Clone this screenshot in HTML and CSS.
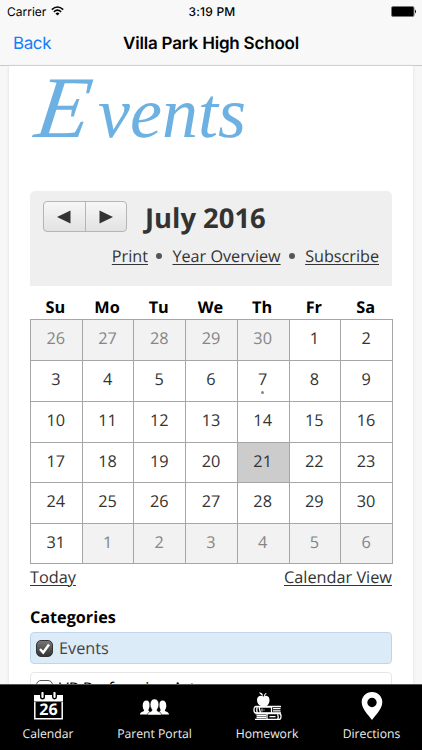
FILE: index.html
```html
<!doctype html>
<html lang="en">
<head>
    <meta charset="utf-8">
    <title>Villa Park High School</title>
    <link rel="stylesheet" href="styles.css">
</head>
<body>
<div class="app">
    <header class="topbar">
        <div class="status">
            <div class="carrier">Carrier
                <svg width="13" height="10" viewBox="0 0 13 10"><g fill="none" stroke="#000" stroke-width="1.6"><path d="M.8 3.6Q6.5-1.6 12.2 3.6"/><path d="M2.9 5.8Q6.5 2.6 10.1 5.8"/></g><path d="M4.5 7.4Q6.5 5.8 8.5 7.4L6.5 9.5z"/></svg>
            </div>
            <div class="time">3:19 PM</div>
            <svg class="battery" width="26" height="11" viewBox="0 0 26 11"><rect x=".5" y=".5" width="22.5" height="10" rx="1.5" stroke="#777"/><path d="M24 3.5q2 2 0 4z"/></svg>
        </div>
        <nav class="navbar">
            <a class="back">Back</a>
            <h2>Villa Park High School</h2>
        </nav>
    </header>

    <main class="page">
        <h1 class="title"><span class="cap">E</span>vents</h1>

        <section class="cal-head">
            <div class="cal-row">
                <div class="pager">
                    <span><svg width="14" height="14" viewBox="0 0 14 14"><path d="M0 7L13.500 .5v13z"/></svg></span>
                    <span><svg width="14" height="14" viewBox="0 0 14 14"><path d="M14 7L.5 .5v13z"/></svg></span>
                </div>
                <h3>July 2016</h3>
            </div>
            <div class="cal-links"><a>Print</a><i></i><a>Year Overview</a><i></i><a>Subscribe</a></div>
        </section>

        <table class="cal">
            <thead>
            <tr><th>Su</th><th>Mo</th><th>Tu</th><th>We</th><th>Th</th><th>Fr</th><th>Sa</th></tr>
            </thead>
            <tbody>
            <tr><td class="off">26</td><td class="off">27</td><td class="off">28</td><td class="off">29</td><td class="off">30</td><td>1</td><td>2</td></tr>
            <tr><td>3</td><td>4</td><td>5</td><td>6</td><td class="event">7</td><td>8</td><td>9</td></tr>
            <tr><td>10</td><td>11</td><td>12</td><td>13</td><td>14</td><td>15</td><td>16</td></tr>
            <tr class="short"><td>17</td><td>18</td><td>19</td><td>20</td><td class="today">21</td><td>22</td><td>23</td></tr>
            <tr><td>24</td><td>25</td><td>26</td><td>27</td><td>28</td><td>29</td><td>30</td></tr>
            <tr class="short"><td>31</td><td class="off">1</td><td class="off">2</td><td class="off">3</td><td class="off">4</td><td class="off">5</td><td class="off">6</td></tr>
            </tbody>
        </table>
        <div class="cal-foot"><a>Today</a><a>Calendar View</a></div>

        <h4>Categories</h4>
        <div class="cat on">
            <span class="box"><svg width="13" height="13" viewBox="0 0 13 13"><path d="M2 7l3.200 3.500L11 2.500" fill="none" stroke="#fff" stroke-width="2.400"/></svg></span>
            Events
        </div>
        <div class="cat"><span class="box"></span>VP Performing Arts</div>
    </main>

    <footer class="tabs">
        <a class="tab t1">
            <svg width="29" height="28" viewBox="0 0 29 28">
                <path d="M0 3h6v2a2.500 2.500 0 0 0 5 0V3h7v2a2.500 2.500 0 0 0 5 0V3h6v6.500H0z" fill="#fff"/>
                <path d="M.8 10v16.700h27.400V10" fill="none" stroke="#fff" stroke-width="1.500"/>
                <path d="M8.500 1v4M20.500 1v4" stroke="#fff" stroke-width="2.200" stroke-linecap="round"/>
                <text x="14.500" y="23" text-anchor="middle" class="day">26</text>
            </svg>
            <span>Calendar</span>
        </a>
        <a class="tab t2">
            <svg width="29" height="28" viewBox="0 0 29 28" fill="#fff">
                <path d="M0 22.500c.2-2.700 3-2.300 4-3.700.3-1-1.400-1.800-1.300-5.200C2.800 10 4.300 8.500 6.300 8.500c2.300 0 3.400 1.700 3.300 4.700 0 3-1.400 3.800-1.200 5 .1.700.5 1 1.200 1.200L7.500 22.500z"/>
                <path d="M29 22.500c-.2-2.700-3-2.300-4-3.700-.3-1 1.400-1.800 1.300-5.200-.1-3.600-1.600-5.100-3.600-5.100-2.300 0-3.400 1.700-3.300 4.700 0 3 1.400 3.800 1.200 5-.1.700-.5 1-1.200 1.200l2.100 3.100z"/>
                <path d="M7.300 23c.1-3.200 3.800-3 4.700-4.500.4-1.300-1.800-2.300-1.800-6 0-3.600 1.900-5.500 4.300-5.500s4.300 1.900 4.300 5.500c0 3.700-2.200 4.700-1.800 6 .9 1.500 4.600 1.300 4.700 4.500z" stroke="#000" stroke-width=".5"/>
            </svg>
            <span>Parent Portal</span>
        </a>
        <a class="tab t3">
            <svg width="29" height="28" viewBox="0 0 29 28">
                <path d="M10.500 4.500c2.500-1.500 6-.5 6 3.500 0 3.500-2 6-3.500 6h-5c-2-.5-4-3-4-6 0-4 4-5 6.500-3.500zM10 4C8.500 3 7 2 6 .500 8.500.2 10 1.500 10 4zM11 4c0-1.500.7-2.500 2-3l.7.900C12.500 2.300 12 3 11.800 4z" fill="#fff"/>
                <g fill="none" stroke="#fff" stroke-width="1.300">
                    <path d="M28 14.500H3c-2.700 0-2.700 6.500 0 6.500h25M4.500 14.500q-1.500 3.200 0 6.500M6 15h12.500v6H7.500zM20 16.700h7.500M20 18.800h7.500"/>
                    <path d="M2.500 21.500H26c2.700 0 2.700 6 0 6H2M3.500 23.500H13M3.500 25.500H13M14 22v5.500M24.500 22.500q1.500 2.500 0 5M16.500 24.700h6"/>
                </g>
                <path d="M9 16.500v3M10.500 18h1" stroke="#fff"/>
            </svg>
            <span>Homework</span>
        </a>
        <a class="tab t4">
            <svg width="22" height="28" viewBox="0 0 22 28"><path fill="#fff" fill-rule="evenodd" d="M11 0c6 0 10.300 4.400 10.300 10.200C21.300 16.500 15.500 22 11 28 6.500 22 .7 16.500.7 10.200.7 4.400 5 0 11 0zm0 5.800a4.700 4.700 0 1 0 0 9.400 4.700 4.700 0 0 0 0-9.400z"/></svg>
            <span>Directions</span>
        </a>
    </footer>
</div>
</body>
</html>
```
FILE: styles.css
```css
* { box-sizing: border-box; }
body { margin: 0; font-family: "Open Sans", "Noto Sans", sans-serif; color: #333; text-rendering: geometricPrecision; }
h1, h2, h3, h4 { margin: 0; }
.app { display: flex; flex-direction: column; height: 750px; overflow: hidden; background: #f7f7f7; }

/* top bar */
.topbar { flex: none; height: 66px; background: #f8f8f8; border-bottom: 1px solid #c9c9c9; font-family: Inter, sans-serif; color: #000; }
.status { display: grid; grid-template-columns: 1fr auto 1fr; align-items: center; height: 22px; padding: 0 5px 0 7px; font-size: 12px; }
.carrier { display: flex; align-items: center; gap: 5px; }
.time { font-weight: 500; letter-spacing: .2px; }
.battery { justify-self: end; }
.navbar { display: grid; grid-template-columns: 1fr auto 1fr; align-items: center; height: 43px; padding: 0 13px; }
.back { color: #147efb; font-size: 17px; letter-spacing: -.4px; }
.navbar h2 { font-size: 17px; font-weight: 600; letter-spacing: -.2px; }

/* content */
.page { flex: 1; min-height: 0; overflow: hidden; margin: 0 9px; padding: 0 21px; background: #fff; box-shadow: 0 0 3px #ddd; }
.title { height: 125px; padding: 1px 0 0 7px; font: italic 72px/84px "Liberation Serif", serif; color: #6cb1e1; white-space: nowrap; }
.title .cap { display: inline-block; width: 61px; font-size: 88px; line-height: 84px; transform: skewX(-8deg); }

.cal-head { height: 95px; padding: 10px 13px 0; background: #efefef; border-radius: 5px 5px 0 0; }
.cal-row { display: flex; height: 37px; }
.cal-row h3 { margin-left: 18px; font-size: 27.400px; line-height: 36px; }
.pager { display: flex; width: 84px; height: 31px; border: 1px solid #b5b5b5; border-radius: 4px; background: linear-gradient(#f7f7f7, #e2e2e2); }
.pager span { flex: 1; display: flex; align-items: center; justify-content: center; }
.pager span + span { border-left: 1px solid #b5b5b5; }
.pager svg { fill: #333; }
.cal-links { display: flex; justify-content: flex-end; align-items: center; height: 36px; font-size: 16.200px; }
a { text-underline-offset: 2px; }
.cal-links a, .cal-foot a { text-decoration: underline; text-decoration-thickness: 1px; }
.cal-links i { width: 6px; height: 6px; margin: 0 10px 0 8.500px; border-radius: 50%; background: #555; }

.cal { width: 363px; margin-top: 9px; table-layout: fixed; border-collapse: collapse; }
.cal th { height: 24px; padding: 0 2px 0 0; font-size: 16.300px; line-height: 24px; color: #000; }
.cal td { height: 41px; padding: 0 1px 4px 0; border: 1px solid #a6a6a6; font-size: 16.300px; line-height: 24px; text-align: center; }
.cal .short td { height: 40px; }
.cal .off { background: #f2f2f2; color: #858585; }
.cal .today { background: #ccc; }
.cal .event { position: relative; }
.event::after { content: ""; position: absolute; left: 23px; bottom: 7px; width: 3px; height: 3px; border-radius: 50%; background: #888; }
.cal-foot { display: flex; justify-content: space-between; font-size: 16.300px; line-height: 24px; margin-top: 1px; }

.page h4 { margin-top: 16px; font-size: 16.200px; line-height: 24px; color: #000; }
.cat { display: flex; align-items: center; height: 32px; margin: 3px 0 8px; padding-left: 5px; border: 1px solid #e6e6e6; border-radius: 4px; font-size: 16.300px; line-height: 24px; color: #000; }
.cat.on { background: #dcebf8; border-color: #c2d5e8; color: #444; }
.box { width: 17px; height: 17px; margin-right: 6px; border: 1px solid #555; border-radius: 5px; background: #fff; }
.on .box { display: flex; align-items: center; justify-content: center; background: linear-gradient(#777, #333); border-color: #333; }

/* tab bar */
.tabs { flex: none; display: flex; height: 66px; border-top: 1px solid #555; background: #000; color: #eee; }
.tab { display: flex; flex-direction: column; align-items: center; padding-top: 7px; font-size: 12.200px; line-height: 18px; }
.tab span { margin-top: 5px; }
.t1 { width: 96px; }
.t2 { width: 117px; }
.t3 { width: 108px; }
.t4 { width: 101px; }
.day { font: bold 16px "Open Sans", sans-serif; fill: #fff; }
```
